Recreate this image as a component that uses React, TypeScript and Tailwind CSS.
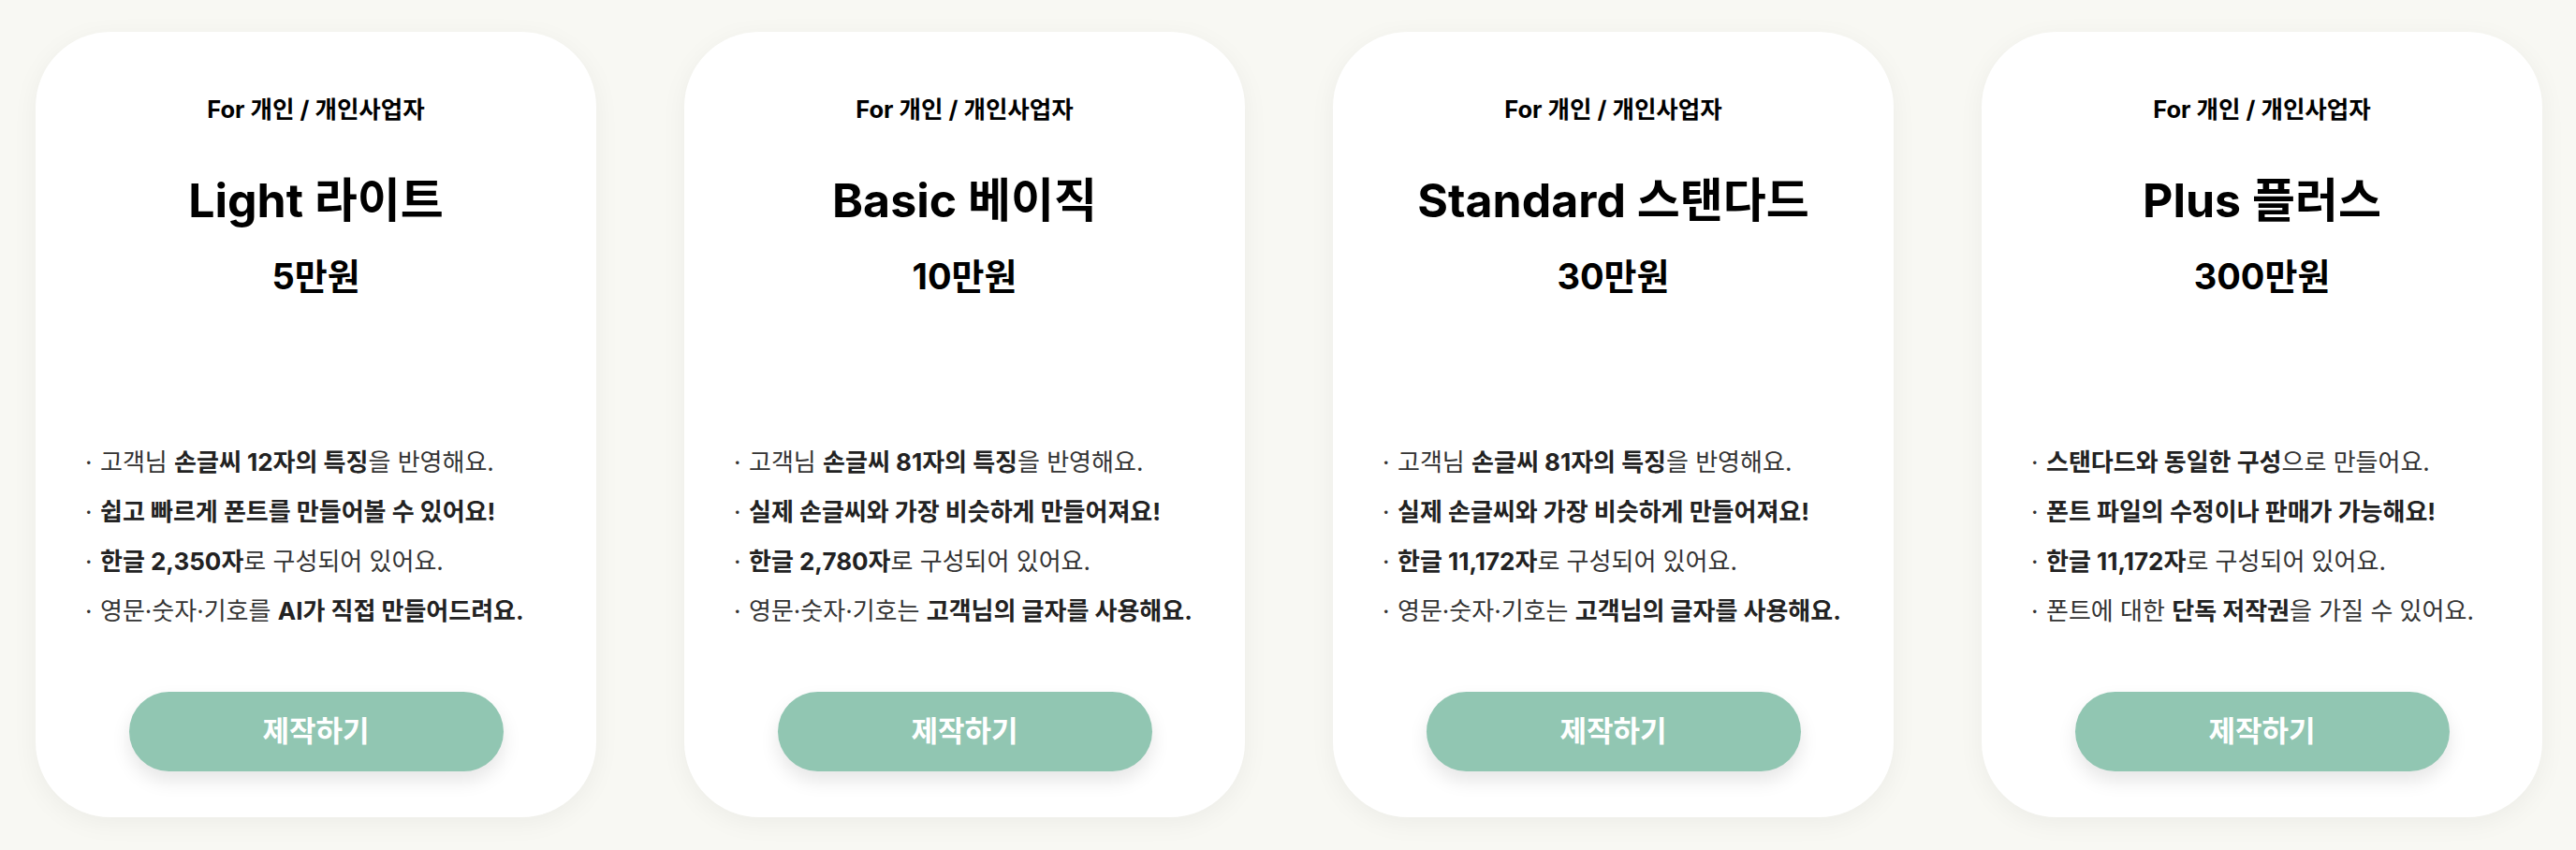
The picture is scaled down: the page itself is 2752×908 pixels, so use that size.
import type { ReactNode } from 'react';

interface PlanCardProps {
  title: string;
  price: string;
  features: ReactNode[];
}

const plans: PlanCardProps[] = [
  {
    title: 'Light 라이트',
    price: '5만원',
    features: [
      <>고객님 <b>손글씨 12자의 특징</b>을 반영해요.</>,
      <b>쉽고 빠르게 폰트를 만들어볼 수 있어요!</b>,
      <><b>한글 2,350자</b>로 구성되어 있어요.</>,
      <>영문·숫자·기호를 <b>AI가 직접 만들어드려요.</b></>,
    ],
  },
  {
    title: 'Basic 베이직',
    price: '10만원',
    features: [
      <>고객님 <b>손글씨 81자의 특징</b>을 반영해요.</>,
      <b>실제 손글씨와 가장 비슷하게 만들어져요!</b>,
      <><b>한글 2,780자</b>로 구성되어 있어요.</>,
      <>영문·숫자·기호는 <b>고객님의 글자를 사용해요.</b></>,
    ],
  },
  {
    title: 'Standard 스탠다드',
    price: '30만원',
    features: [
      <>고객님 <b>손글씨 81자의 특징</b>을 반영해요.</>,
      <b>실제 손글씨와 가장 비슷하게 만들어져요!</b>,
      <><b>한글 11,172자</b>로 구성되어 있어요.</>,
      <>영문·숫자·기호는 <b>고객님의 글자를 사용해요.</b></>,
    ],
  },
  {
    title: 'Plus 플러스',
    price: '300만원',
    features: [
      <><b>스탠다드와 동일한 구성</b>으로 만들어요.</>,
      <b>폰트 파일의 수정이나 판매가 가능해요!</b>,
      <><b>한글 11,172자</b>로 구성되어 있어요.</>,
      <>폰트에 대한 <b>단독 저작권</b>을 가질 수 있어요.</>,
    ],
  },
];

function PlanCard({ title, price, features }: PlanCardProps) {
  return (
    <div className="w-[599px] shrink-0 h-[839px] bg-white rounded-[80px] shadow-[0_6px_28px_rgba(0,0,0,0.05)] flex flex-col items-center pt-[67px]">
      <div className="text-[25.5px] leading-[32px] font-bold text-black">For 개인 / 개인사업자</div>
      <div className="mt-[51px] text-[50px] leading-[60px] font-bold text-black">{title}</div>
      <div className="mt-[29px] text-[38px] leading-[44px] font-bold text-black">{price}</div>
      <ul className="mt-[150px] self-stretch pl-[53px] text-[26px] text-[#333] [&_b]:font-bold [&_b]:text-[#222]">
        {features.map((f, i) => (
          <li key={i} className="flex leading-[53px]">
            <span className="w-[16px] shrink-0">·</span>
            <span>{f}</span>
          </li>
        ))}
      </ul>
      <button className="mt-[60px] w-[400px] h-[85px] rounded-full bg-[#91c6b2] text-white text-[31px] font-bold shadow-[0_10px_20px_rgba(0,0,0,0.1)]">
        제작하기
      </button>
    </div>
  );
}

export default function App() {
  return (
    <div
      className="w-[2752px] h-[908px] bg-[#f8f8f3] flex gap-[94px] px-[38px] pt-[34px]"
      style={{ fontFamily: "Inter, 'Noto Sans CJK KR', sans-serif" }}
    >
      {plans.map((p) => (
        <PlanCard key={p.title} {...p} />
      ))}
    </div>
  );
}
